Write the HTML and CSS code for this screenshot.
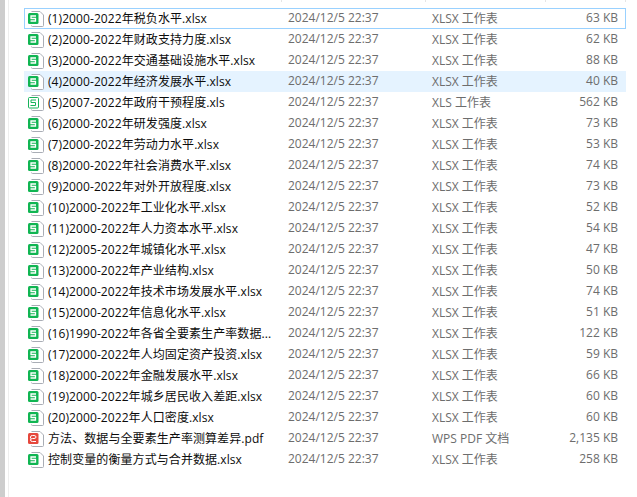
FILE: index.html
```html
<!DOCTYPE html>
<html lang="zh-CN">
  <head>
    <meta charset="UTF-8" />
    <title>文件列表</title>
    <link rel="stylesheet" href="styles.css">
  </head>
  <body>
    <svg class="icon-defs" width="0" height="0" aria-hidden="true">
      <symbol id="page" viewBox="0 0 16 16">
        <path d="M3.5 .5H12L15.5 4V14.5Q15.5 15.5 14.5 15.5H4.5Q3.5 15.5 3.5 14.5" fill="#fff" stroke="#a9adb5" />
      </symbol>
      <symbol id="icon-xlsx" viewBox="0 0 16 16">
        <use href="#page" />
        <rect x="0" y="2" width="10.5" height="11" rx="1.5" fill="#10b552" />
        <path d="M8 5H3V7.5H7.5V10H2.5" fill="none" stroke="#fff" stroke-width="1.3" />
      </symbol>
      <symbol id="icon-xls" viewBox="0 0 16 16">
        <use href="#page" />
        <rect x="0.5" y="2.5" width="10" height="10.5" rx="1" fill="#fff" stroke="#17b35a" />
        <path d="M8 5H3V7.5H7.5V10.5H2.5" fill="none" stroke="#17b35a" />
      </symbol>
      <symbol id="icon-pdf" viewBox="0 0 16 16">
        <use href="#page" />
        <rect x="0" y="2" width="10.5" height="11" rx="1.5" fill="#e5483d" />
        <path d="M2.5 7.5V6Q2.5 4.5 4.5 4.5H6Q8 4.5 8 6T6 7.5H4.5Q2.5 7.5 2.5 9T4.5 10.5H8" fill="none" stroke="#fff" />
      </symbol>
    </svg>

    <div class="explorer">
      <div class="side-rail"></div>
      <div class="side-gap"></div>
      <div class="file-pane">
        <div class="header-ticks">
          <span class="tick tick-name"></span>
          <span class="tick tick-date"></span>
          <span class="tick tick-type"></span>
          <span class="tick tick-size"></span>
        </div>

        <ul class="file-list">
          <li class="file-row is-focused">
            <svg class="file-icon"><use href="#icon-xlsx" /></svg>
            <span class="file-name">(1)2000-2022年税负水平.xlsx</span>
            <span class="file-date">2024/12/5 22:37</span>
            <span class="file-type">XLSX 工作表</span>
            <span class="file-size">63 KB</span>
          </li>
          <li class="file-row">
            <svg class="file-icon"><use href="#icon-xlsx" /></svg>
            <span class="file-name">(2)2000-2022年财政支持力度.xlsx</span>
            <span class="file-date">2024/12/5 22:37</span>
            <span class="file-type">XLSX 工作表</span>
            <span class="file-size">62 KB</span>
          </li>
          <li class="file-row">
            <svg class="file-icon"><use href="#icon-xlsx" /></svg>
            <span class="file-name">(3)2000-2022年交通基础设施水平.xlsx</span>
            <span class="file-date">2024/12/5 22:37</span>
            <span class="file-type">XLSX 工作表</span>
            <span class="file-size">88 KB</span>
          </li>
          <li class="file-row is-hover">
            <svg class="file-icon"><use href="#icon-xlsx" /></svg>
            <span class="file-name">(4)2000-2022年经济发展水平.xlsx</span>
            <span class="file-date">2024/12/5 22:37</span>
            <span class="file-type">XLSX 工作表</span>
            <span class="file-size">40 KB</span>
          </li>
          <li class="file-row">
            <svg class="file-icon"><use href="#icon-xls" /></svg>
            <span class="file-name">(5)2007-2022年政府干预程度.xls</span>
            <span class="file-date">2024/12/5 22:37</span>
            <span class="file-type">XLS 工作表</span>
            <span class="file-size">562 KB</span>
          </li>
          <li class="file-row">
            <svg class="file-icon"><use href="#icon-xlsx" /></svg>
            <span class="file-name">(6)2000-2022年研发强度.xlsx</span>
            <span class="file-date">2024/12/5 22:37</span>
            <span class="file-type">XLSX 工作表</span>
            <span class="file-size">73 KB</span>
          </li>
          <li class="file-row">
            <svg class="file-icon"><use href="#icon-xlsx" /></svg>
            <span class="file-name">(7)2000-2022年劳动力水平.xlsx</span>
            <span class="file-date">2024/12/5 22:37</span>
            <span class="file-type">XLSX 工作表</span>
            <span class="file-size">53 KB</span>
          </li>
          <li class="file-row">
            <svg class="file-icon"><use href="#icon-xlsx" /></svg>
            <span class="file-name">(8)2000-2022年社会消费水平.xlsx</span>
            <span class="file-date">2024/12/5 22:37</span>
            <span class="file-type">XLSX 工作表</span>
            <span class="file-size">74 KB</span>
          </li>
          <li class="file-row">
            <svg class="file-icon"><use href="#icon-xlsx" /></svg>
            <span class="file-name">(9)2000-2022年对外开放程度.xlsx</span>
            <span class="file-date">2024/12/5 22:37</span>
            <span class="file-type">XLSX 工作表</span>
            <span class="file-size">73 KB</span>
          </li>
          <li class="file-row">
            <svg class="file-icon"><use href="#icon-xlsx" /></svg>
            <span class="file-name">(10)2000-2022年工业化水平.xlsx</span>
            <span class="file-date">2024/12/5 22:37</span>
            <span class="file-type">XLSX 工作表</span>
            <span class="file-size">52 KB</span>
          </li>
          <li class="file-row">
            <svg class="file-icon"><use href="#icon-xlsx" /></svg>
            <span class="file-name">(11)2000-2022年人力资本水平.xlsx</span>
            <span class="file-date">2024/12/5 22:37</span>
            <span class="file-type">XLSX 工作表</span>
            <span class="file-size">54 KB</span>
          </li>
          <li class="file-row">
            <svg class="file-icon"><use href="#icon-xlsx" /></svg>
            <span class="file-name">(12)2005-2022年城镇化水平.xlsx</span>
            <span class="file-date">2024/12/5 22:37</span>
            <span class="file-type">XLSX 工作表</span>
            <span class="file-size">47 KB</span>
          </li>
          <li class="file-row">
            <svg class="file-icon"><use href="#icon-xlsx" /></svg>
            <span class="file-name">(13)2000-2022年产业结构.xlsx</span>
            <span class="file-date">2024/12/5 22:37</span>
            <span class="file-type">XLSX 工作表</span>
            <span class="file-size">50 KB</span>
          </li>
          <li class="file-row">
            <svg class="file-icon"><use href="#icon-xlsx" /></svg>
            <span class="file-name">(14)2000-2022年技术市场发展水平.xlsx</span>
            <span class="file-date">2024/12/5 22:37</span>
            <span class="file-type">XLSX 工作表</span>
            <span class="file-size">74 KB</span>
          </li>
          <li class="file-row">
            <svg class="file-icon"><use href="#icon-xlsx" /></svg>
            <span class="file-name">(15)2000-2022年信息化水平.xlsx</span>
            <span class="file-date">2024/12/5 22:37</span>
            <span class="file-type">XLSX 工作表</span>
            <span class="file-size">51 KB</span>
          </li>
          <li class="file-row">
            <svg class="file-icon"><use href="#icon-xlsx" /></svg>
            <span class="file-name">(16)1990-2022年各省全要素生产率数据...</span>
            <span class="file-date">2024/12/5 22:37</span>
            <span class="file-type">XLSX 工作表</span>
            <span class="file-size">122 KB</span>
          </li>
          <li class="file-row">
            <svg class="file-icon"><use href="#icon-xlsx" /></svg>
            <span class="file-name">(17)2000-2022年人均固定资产投资.xlsx</span>
            <span class="file-date">2024/12/5 22:37</span>
            <span class="file-type">XLSX 工作表</span>
            <span class="file-size">59 KB</span>
          </li>
          <li class="file-row">
            <svg class="file-icon"><use href="#icon-xlsx" /></svg>
            <span class="file-name">(18)2000-2022年金融发展水平.xlsx</span>
            <span class="file-date">2024/12/5 22:37</span>
            <span class="file-type">XLSX 工作表</span>
            <span class="file-size">66 KB</span>
          </li>
          <li class="file-row">
            <svg class="file-icon"><use href="#icon-xlsx" /></svg>
            <span class="file-name">(19)2000-2022年城乡居民收入差距.xlsx</span>
            <span class="file-date">2024/12/5 22:37</span>
            <span class="file-type">XLSX 工作表</span>
            <span class="file-size">60 KB</span>
          </li>
          <li class="file-row">
            <svg class="file-icon"><use href="#icon-xlsx" /></svg>
            <span class="file-name">(20)2000-2022年人口密度.xlsx</span>
            <span class="file-date">2024/12/5 22:37</span>
            <span class="file-type">XLSX 工作表</span>
            <span class="file-size">60 KB</span>
          </li>
          <li class="file-row">
            <svg class="file-icon"><use href="#icon-pdf" /></svg>
            <span class="file-name">方法、数据与全要素生产率测算差异.pdf</span>
            <span class="file-date">2024/12/5 22:37</span>
            <span class="file-type">WPS PDF 文档</span>
            <span class="file-size">2,135 KB</span>
          </li>
          <li class="file-row">
            <svg class="file-icon"><use href="#icon-xlsx" /></svg>
            <span class="file-name">控制变量的衡量方式与合并数据.xlsx</span>
            <span class="file-date">2024/12/5 22:37</span>
            <span class="file-type">XLSX 工作表</span>
            <span class="file-size">258 KB</span>
          </li>
        </ul>
      </div>
    </div>
  </body>
</html>
```

FILE: styles.css
```css
* {
  box-sizing: border-box;
  margin: 0;
  padding: 0;
}

html,
body {
  height: 100%;
  overflow: hidden;
}

body {
  font-family: "Open Sans", "Noto Sans CJK SC", sans-serif;
  font-size: 12px;
  background-color: #ffffff;
  color: #0c0c0c;
}

.icon-defs {
  position: absolute;
}

.explorer {
  display: flex;
  height: 100%;
}

.side-rail {
  width: 5px;
  background-color: #cdcdcd;
  flex-shrink: 0;
}

.side-gap {
  width: 4px;
  background-color: #ffffff;
  border-right: 1px solid #eeeeee;
  flex-shrink: 0;
}

.file-pane {
  flex-grow: 1;
  padding: 0 15px;
}

/* column dividers, only their bottoms are still in view */
.header-ticks {
  display: flex;
  height: 8px;
}

.tick {
  height: 2px;
  border-right: 1px solid #e5e5e5;
  flex-shrink: 0;
}
.tick-name {
  width: 258px;
}
.tick-date {
  width: 144px;
}
.tick-type {
  width: 120px;
}
.tick-size {
  width: 80px;
}

.file-list {
  list-style: none;
}

.file-row {
  display: grid;
  grid-template-columns: 260px 144px 122px 64px;
  align-items: center;
  height: 21px;
  padding-left: 4px;
  white-space: nowrap;
}
.file-row.is-focused {
  box-shadow: inset 0 0 0 1px #99d1ff;
}
.file-row.is-hover {
  background-color: #e5f3ff;
}

.file-icon {
  grid-column: 1;
  grid-row: 1;
  width: 16px;
  height: 16px;
}

.file-name,
.file-date,
.file-type,
.file-size {
  padding-bottom: 2px;
}

.file-name {
  grid-column: 1;
  grid-row: 1;
  padding-left: 20px;
  letter-spacing: 0.08px;
}

.file-date,
.file-type,
.file-size {
  color: #6d6d6d;
}

.file-size {
  text-align: right;
}
```
